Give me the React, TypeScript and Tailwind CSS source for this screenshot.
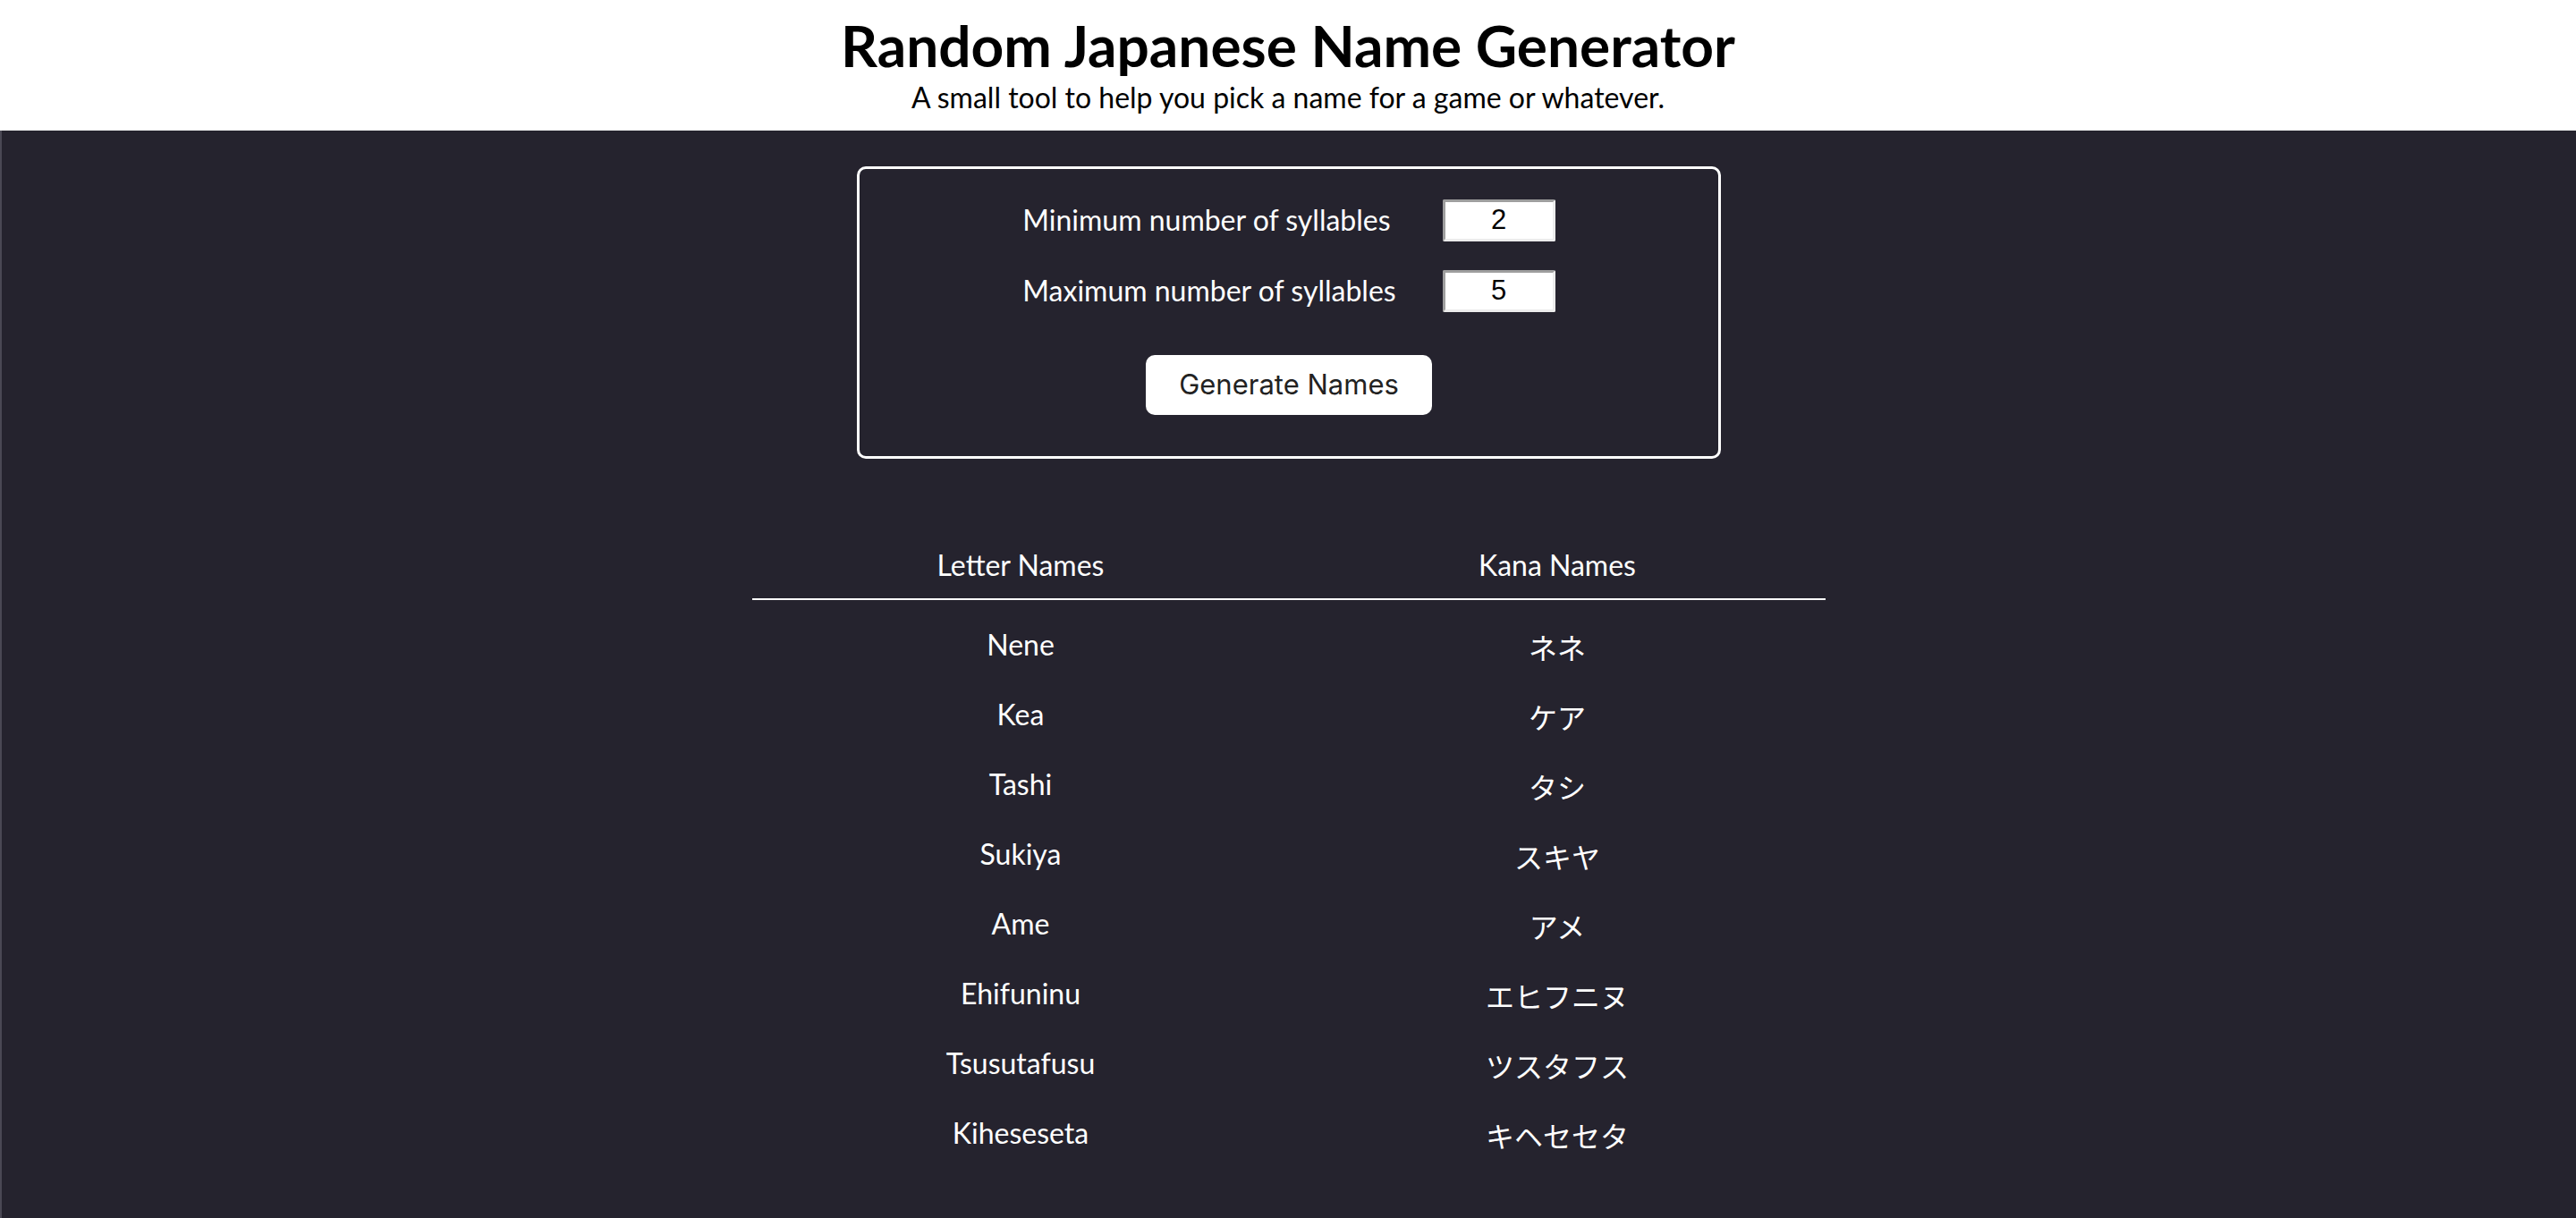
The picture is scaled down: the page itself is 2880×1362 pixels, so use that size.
import React, { useState } from "react";

const NAMES: { letters: string; kana: string }[] = [
  { letters: "Nene", kana: "ネネ" },
  { letters: "Kea", kana: "ケア" },
  { letters: "Tashi", kana: "タシ" },
  { letters: "Sukiya", kana: "スキヤ" },
  { letters: "Ame", kana: "アメ" },
  { letters: "Ehifuninu", kana: "エヒフニヌ" },
  { letters: "Tsusutafusu", kana: "ツスタフス" },
  { letters: "Kiheseseta", kana: "キヘセセタ" },
];

const App: React.FC = () => {
  const [minSyl, setMinSyl] = useState("2");
  const [maxSyl, setMaxSyl] = useState("5");

  const inputClass =
    "w-[126px] h-[47px] bg-white text-black text-center text-[31px] font-['Liberation_Sans',sans-serif] border-[3px] border-t-[#9e9e9e] border-l-[#9e9e9e] border-b-[#ececec] border-r-[#ececec] rounded-[2px] outline-none";

  return (
    <div className="min-h-screen flex flex-col font-['Lato','Noto_Sans_CJK_JP',sans-serif]">
      <header className="h-[146px] bg-white flex flex-col items-center pt-[10px]">
        <h1 className="text-[64px] leading-[82px] font-bold text-black">Random Japanese Name Generator</h1>
        <p className="text-[32px] leading-[38px] text-black -mt-[2px]">
          A small tool to help you pick a name for a game or whatever.
        </p>
      </header>

      <main className="flex-1 bg-[#25232e] border-l-2 border-[#4a4854] pt-[40px] pb-[60px] text-white">
        <div className="w-[966px] mx-auto border-[3px] border-white rounded-[10px] pt-[33px] pb-[46px] flex flex-col items-center">
          <div className="grid grid-cols-[auto_126px] gap-x-[52px] gap-y-[31px] items-center">
            <label className="text-[32px]">Minimum number of syllables</label>
            <input className={inputClass} value={minSyl} onChange={(e) => setMinSyl(e.target.value)} />
            <label className="text-[32px]">Maximum number of syllables</label>
            <input className={inputClass} value={maxSyl} onChange={(e) => setMaxSyl(e.target.value)} />
          </div>
          <button className="mt-[48px] w-[320px] h-[67px] bg-white rounded-[10px] text-[#222] text-[31px] font-['Inter',sans-serif]">
            Generate Names
          </button>
        </div>

        <div className="w-[1200px] mx-auto mt-[88px]">
          <div className="grid grid-cols-2 border-b-2 border-white h-[70px] items-center text-[32px] pb-[6px]">
            <div className="text-center">Letter Names</div>
            <div className="text-center">Kana Names</div>
          </div>
          <div className="mt-[11px]">
            {NAMES.map((n) => (
              <div key={n.letters} className="grid grid-cols-2 h-[78px] items-center text-[32px]">
                <div className="text-center">{n.letters}</div>
                <div className="text-center pt-[8px]">{n.kana}</div>
              </div>
            ))}
          </div>
        </div>
      </main>
    </div>
  );
};

export default App;
